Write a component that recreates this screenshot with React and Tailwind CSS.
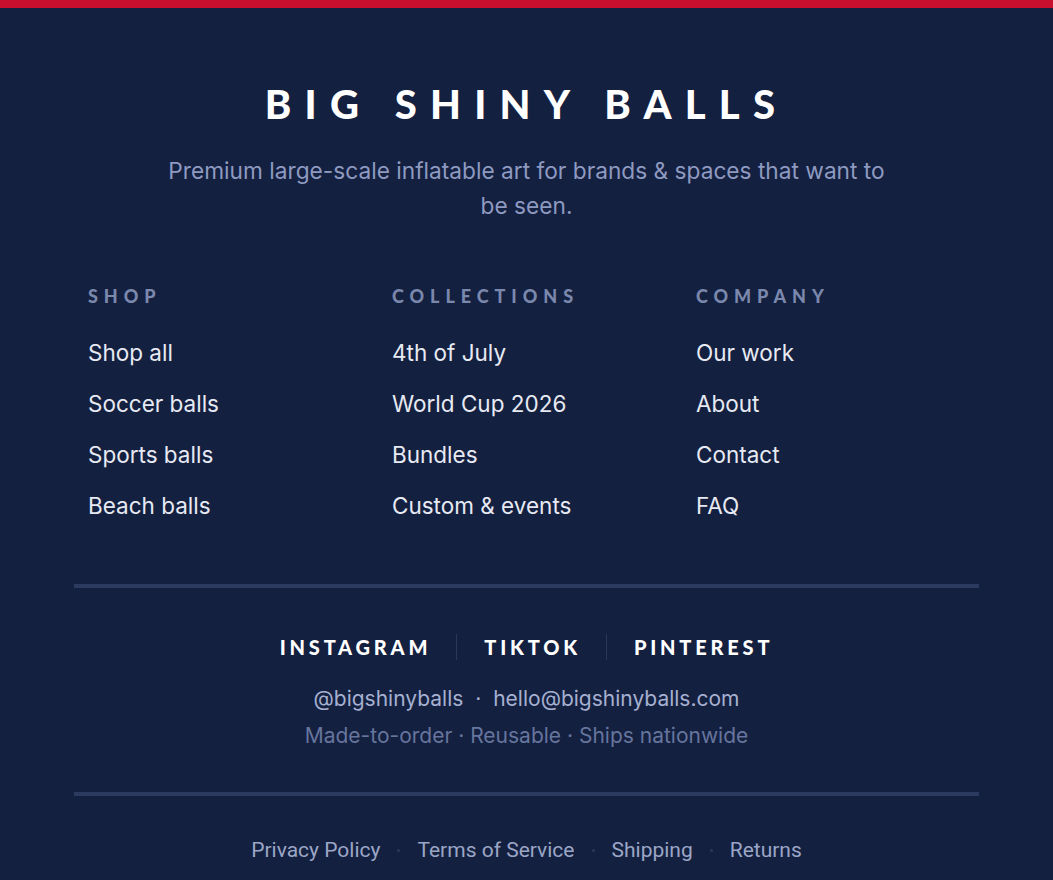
export default function App() {
  const cols = [
    { title: "Shop", links: ["Shop all", "Soccer balls", "Sports balls", "Beach balls"] },
    { title: "Collections", links: ["4th of July", "World Cup 2026", "Bundles", "Custom & events"] },
    { title: "Company", links: ["Our work", "About", "Contact", "FAQ"] },
  ];
  const display = { fontFamily: "Lato, 'DejaVu Sans', sans-serif" };
  const body = { fontFamily: "Inter, 'Liberation Sans', sans-serif" };

  return (
    <div className="min-h-screen bg-[#142040]" style={body}>
      <div className="h-2 bg-[#c8102e]" />
      <footer className="mx-auto w-[905px] pt-[72px]">
        <div className="text-center">
          <h2
            className="text-[40px] leading-[48px] font-black uppercase tracking-[0.33em] text-white"
            style={display}
          >
            Big Shiny Balls
          </h2>
          <p className="mx-auto mt-[25px] max-w-[735px] text-[22.7px] leading-[35px] text-[#8e9ac0]">
            Premium large-scale inflatable art for brands &amp; spaces that want to be seen.
          </p>
        </div>

        <div className="mt-[62px] grid grid-cols-3 gap-x-[35px] px-[14px]">
          {cols.map((c) => (
            <div key={c.title}>
              <h3
                className="text-[18px] leading-[22px] font-black uppercase tracking-[0.33em] text-[#7b88ad]"
                style={display}
              >
                {c.title}
              </h3>
              <ul className="mt-[31px] flex flex-col gap-[21px]">
                {c.links.map((l) => (
                  <li key={l} className="text-[22.5px] leading-[30px] text-[#e7eaf3]">
                    {l}
                  </li>
                ))}
              </ul>
            </div>
          ))}
        </div>

        <div className="mt-[63px] h-1 bg-[#2c3a5f]" />

        <div className="pt-[46px] pb-[42px] text-center">
          <div className="flex items-center justify-center" style={display}>
            {["Instagram", "TikTok", "Pinterest"].map((s, i) => (
              <div key={s} className="flex items-center">
                {i > 0 && <span className="mr-[27px] ml-[25px] h-[26px] w-px bg-[#2a3759]" />}
                <span className="text-[20px] leading-[24px] font-black uppercase tracking-[0.19em] text-white">
                  {s}
                </span>
              </div>
            ))}
          </div>
          <p className="mt-[23px] text-[21px] leading-[32px] text-[#a6b0d0]">
            @bigshinyballs <span className="mx-[6px]">·</span> hello@bigshinyballs.com
          </p>
          <p className="mt-[7px] text-[21px] leading-[28px] text-[#66759d]">
            Made-to-order · Reusable · Ships nationwide
          </p>
        </div>

        <div className="h-1 bg-[#2c3a5f]" />

        <div
          className="flex items-center justify-center gap-[17px] pt-[42px] pb-[20px] text-[21px] leading-[24px] text-[#9ba6c6]"
          style={{ fontFamily: "Roboto, 'Liberation Sans', sans-serif" }}
        >
          {["Privacy Policy", "Terms of Service", "Shipping", "Returns"].map((l, i) => (
            <div key={l} className="flex items-center gap-[17px]">
              {i > 0 && <span className="h-[3px] w-[3px] rounded-full bg-[#2c3a5f]" />}
              <span>{l}</span>
            </div>
          ))}
        </div>
      </footer>
    </div>
  );
}
